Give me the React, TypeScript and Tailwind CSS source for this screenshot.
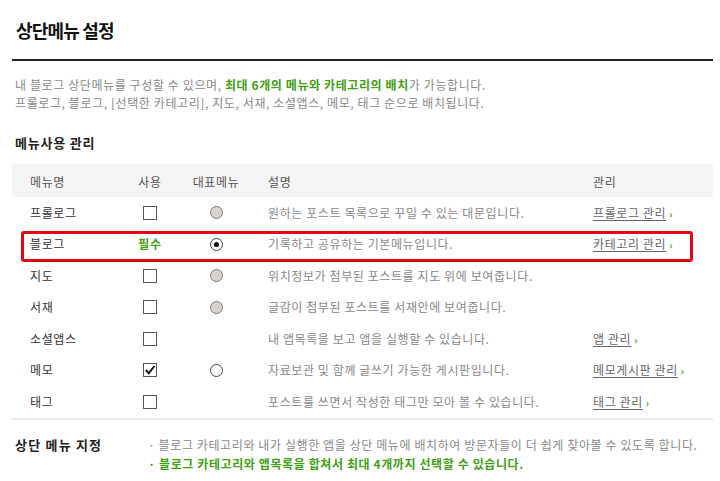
import React from 'react';

type Row = {
  name: string;
  use: 'empty' | 'checked' | 'required';
  rep: 'gray' | 'selected' | 'white' | null;
  desc: string;
  link?: string;
  highlight?: boolean;
};

const rows: Row[] = [
  { name: '프롤로그', use: 'empty', rep: 'gray', desc: '원하는 포스트 목록으로 꾸밀 수 있는 대문입니다.', link: '프롤로그 관리' },
  { name: '블로그', use: 'required', rep: 'selected', desc: '기록하고 공유하는 기본메뉴입니다.', link: '카테고리 관리', highlight: true },
  { name: '지도', use: 'empty', rep: 'gray', desc: '위치정보가 첨부된 포스트를 지도 위에 보여줍니다.' },
  { name: '서재', use: 'empty', rep: 'gray', desc: '글감이 첨부된 포스트를 서재안에 보여줍니다.' },
  { name: '소셜앱스', use: 'empty', rep: null, desc: '내 앱목록을 보고 앱을 실행할 수 있습니다.', link: '앱 관리' },
  { name: '메모', use: 'checked', rep: 'white', desc: '자료보관 및 함께 글쓰기 가능한 게시판입니다.', link: '메모게시판 관리' },
  { name: '태그', use: 'empty', rep: null, desc: '포스트를 쓰면서 작성한 태그만 모아 볼 수 있습니다.', link: '태그 관리' },
];

function Checkbox({ checked }: { checked?: boolean }) {
  return (
    <span className="flex h-[14px] w-[14px] items-center justify-center border border-[#555] bg-white">
      {checked && (
        <svg width="12" height="12" viewBox="0 0 12 12">
          <path d="M1.8 6 L4.8 9.2 L10.5 2" fill="none" stroke="#111" strokeWidth="1.9" />
        </svg>
      )}
    </span>
  );
}

function Radio({ kind }: { kind: 'gray' | 'selected' | 'white' }) {
  if (kind === 'gray') {
    return <span className="block h-[13px] w-[13px] rounded-full border border-[#777] bg-[#d6d4cc]" />;
  }
  return (
    <span className="flex h-[13px] w-[13px] items-center justify-center rounded-full border border-[#444] bg-white">
      {kind === 'selected' && <span className="block h-[5px] w-[5px] rounded-full bg-black" />}
    </span>
  );
}

export default function App() {
  return (
    <div
      className="w-[720px] h-[481px] overflow-hidden bg-white px-3"
      style={{ fontFamily: '"Noto Sans CJK KR", "Noto Sans", sans-serif' }}
    >
      <div className="w-[701px]">
        {/* Title */}
        <h1 className="pt-[18px] pl-[4px] text-[18px] leading-[24px] font-bold text-[#111] tracking-[-0.8px]">
          상단메뉴 설정
        </h1>
        <div className="mt-[17px] h-[2px] bg-[#222]" />

        {/* Intro */}
        <div className="mt-[15px] pl-[3px] text-[12px] leading-[18px] tracking-[0.6px] text-[#888]">
          <p>
            내 블로그 상단메뉴를 구성할 수 있으며,{' '}
            <span className="font-bold text-[#3fa014]">최대 6개의 메뉴와 카테고리의 배치</span>가 가능합니다.
          </p>
          <p>프롤로그, 블로그, [선택한 카테고리], 지도, 서재, 소셜앱스, 메모, 태그 순으로 배치됩니다.</p>
        </div>

        <h2 className="mt-[22px] pl-[3px] text-[13px] leading-[18px] font-bold tracking-[0.8px] text-[#222]">
          메뉴사용 관리
        </h2>

        {/* Table */}
        <div className="mt-3 border-b-2 border-[#e6e6e6] tracking-[0.6px]">
          <div className="grid h-[33px] grid-cols-[108px_60px_72px_341px_1fr] items-center bg-[#f4f4f4] pt-[3px] text-[12px] text-[#555]">
            <span className="pl-[18px]">메뉴명</span>
            <span className="text-center">사용</span>
            <span className="text-center">대표메뉴</span>
            <span className="pl-4">설명</span>
            <span>관리</span>
          </div>
          {rows.map((r) => (
            <div
              key={r.name}
              className="relative grid h-[31.5px] grid-cols-[108px_60px_72px_341px_1fr] items-center text-[12px]"
            >
              <span className="pl-[18px] text-[#333]">{r.name}</span>
              <span className="flex justify-center">
                {r.use === 'required' ? (
                  <span className="font-bold text-[#3fa014]">필수</span>
                ) : (
                  <Checkbox checked={r.use === 'checked'} />
                )}
              </span>
              <span className="flex justify-center">{r.rep && <Radio kind={r.rep} />}</span>
              <span className="pl-4 text-[#888]">{r.desc}</span>
              <span className="text-[#666]">
                {r.link && (
                  <>
                    <span className="underline underline-offset-2">{r.link}</span>
                    <span className="ml-[3px] text-[10px] font-bold text-[#3fa014]">›</span>
                  </>
                )}
              </span>
              {r.highlight && (
                <div className="pointer-events-none absolute top-[2px] left-[9px] h-[31px] w-[672px] rounded-[3px] border-[3px] border-[#e30613]" />
              )}
            </div>
          ))}
        </div>

        {/* Bottom note */}
        <div className="mt-[15px] flex">
          <h2 className="w-[136px] pl-[3px] text-[13px] leading-[19px] font-bold tracking-[1.2px] text-[#222]">
            상단 메뉴 지정
          </h2>
          <div className="text-[12px] leading-[19px] tracking-[0.6px]">
            <p className="text-[#888]">· 블로그 카테고리와 내가 실행한 앱을 상단 메뉴에 배치하여 방문자들이 더 쉽게 찾아볼 수 있도록 합니다.</p>
            <p className="font-bold text-[#3fa014]">· 블로그 카테고리와 앱목록을 합쳐서 최대 4개까지 선택할 수 있습니다.</p>
          </div>
        </div>
      </div>
    </div>
  );
}
